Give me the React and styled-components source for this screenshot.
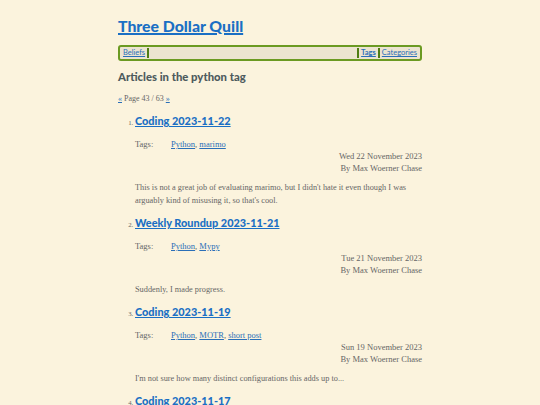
import React from "react";
import styled, { createGlobalStyle } from "styled-components";

const Global = createGlobalStyle`
  html, body { margin: 0; padding: 0; background: #fbf3dd; }
  body { font-family: "Liberation Serif", serif; color: #555; }
`;

const Page = styled.div`
  width: 304px;
  margin: 0 auto;
  padding-top: 14px;
`;

const SiteTitle = styled.h1`
  margin: 0 0 7px;
  font-family: "Lato", "Open Sans", sans-serif;
  font-size: 15.8px;
  font-weight: 900;
  line-height: 24px;
  a { color: #1a6fc4; text-decoration: underline; text-decoration-thickness: 1.5px; }
`;

const Nav = styled.nav`
  display: flex;
  align-items: stretch;
  height: 10px;
  border: 2px solid #6b9a22;
  border-radius: 3px;
  background: #ece4d0;
  padding: 1px 1px;
  font-family: "Lato", sans-serif;
  font-size: 7.5px;
  line-height: 10px;
`;

const NavLink = styled.a`
  color: #2a6fb8;
  text-decoration: underline;
  font-weight: ${(p) => (p.$bold ? 700 : 400)};
  padding: 0 2px;
`;

const Sep = styled.span`
  width: 2px;
  background: #4f7d12;
`;

const Spacer = styled.div`
  flex: 1;
`;

const Heading = styled.h2`
  margin: 7px 0 0;
  font-family: "Lato", sans-serif;
  font-size: 11.3px;
  font-weight: 900;
  color: #4e5b5d;
  line-height: 18px;
`;

const Pager = styled.div`
  margin-top: 8px;
  font-size: 8px;
  line-height: 10px;
  color: #666;
  a { color: #2a6fb8; }
`;

const List = styled.ol`
  margin: 8px 0 0;
  padding-left: 17px;
  font-size: 6.8px;
  color: #666;
`;

const Item = styled.li`
  margin-bottom: 7px;
  &::marker { color: #666; }
`;

const ItemTitle = styled.h3`
  margin: 0;
  display: inline;
  font-family: "Lato", sans-serif;
  font-size: 10.9px;
  font-weight: 900;
  line-height: 18px;
  a { color: #1a6fc4; text-decoration: underline; }
`;

const Tags = styled.div`
  display: flex;
  margin-top: 8px;
  font-size: 8.5px;
  line-height: 12px;
  color: #666;
`;

const TagLabel = styled.span`
  width: 36px;
`;

const TagLink = styled.a`
  color: #2a6fb8;
  text-decoration: underline;
`;

const Meta = styled.div`
  text-align: right;
  font-size: 8.5px;
  line-height: 12px;
  color: #666;
`;

const Summary = styled.p`
  margin: 7px 0 0;
  font-size: 8.3px;
  line-height: 13px;
  color: #666;
`;

const articles = [
  {
    title: "Coding 2023-11-22",
    tags: ["Python", "marimo"],
    date: "Wed 22 November 2023",
    summary:
      "This is not a great job of evaluating marimo, but I didn't hate it even though I was arguably kind of misusing it, so that's cool.",
  },
  {
    title: "Weekly Roundup 2023-11-21",
    tags: ["Python", "Mypy"],
    date: "Tue 21 November 2023",
    summary: "Suddenly, I made progress.",
  },
  {
    title: "Coding 2023-11-19",
    tags: ["Python", "MOTR", "short post"],
    date: "Sun 19 November 2023",
    summary: "I'm not sure how many distinct configurations this adds up to...",
  },
  {
    title: "Coding 2023-11-17",
    tags: ["Python"],
    date: "Fri 17 November 2023",
    summary: "",
  },
];

export default function App() {
  return (
    <>
      <Global />
      <Page>
        <SiteTitle>
          <a href="#">Three Dollar Quill</a>
        </SiteTitle>
        <Nav>
          <NavLink href="#">Beliefs</NavLink>
          <Sep />
          <Spacer />
          <Sep />
          <NavLink href="#" $bold>Tags</NavLink>
          <Sep />
          <NavLink href="#">Categories</NavLink>
        </Nav>
        <Heading>Articles in the python tag</Heading>
        <Pager>
          <a href="#">«</a> Page 43 / 63 <a href="#">»</a>
        </Pager>
        <List>
          {articles.map((a) => (
            <Item key={a.title}>
              <ItemTitle>
                <a href="#">{a.title}</a>
              </ItemTitle>
              <Tags>
                <TagLabel>Tags:</TagLabel>
                <span>
                  {a.tags.map((t, i) => (
                    <React.Fragment key={t}>
                      {i > 0 && ", "}
                      <TagLink href="#">{t}</TagLink>
                    </React.Fragment>
                  ))}
                </span>
              </Tags>
              <Meta>
                {a.date}
                <br />
                By Max Woerner Chase
              </Meta>
              {a.summary && <Summary>{a.summary}</Summary>}
            </Item>
          ))}
        </List>
      </Page>
    </>
  );
}
